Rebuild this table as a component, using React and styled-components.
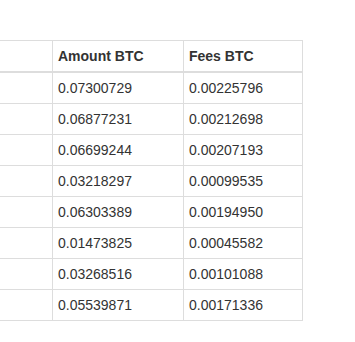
import React from "react";
import styled, { createGlobalStyle } from "styled-components";

const Global = createGlobalStyle`
  html, body { margin: 0; padding: 0; background: #fff; }
  body { font-family: "Liberation Sans", Arial, sans-serif; font-size: 14px; line-height: 20px; color: #333; }
`;

const Page = styled.div`
  width: 355px;
  height: 342px;
  overflow: hidden;
  padding-top: 40px;
  box-sizing: border-box;
`;

const Table = styled.table`
  border-collapse: collapse;
  border-spacing: 0;
  margin-left: -60px;
  border: 1px solid #ddd;
`;

const Th = styled.th`
  text-align: left;
  font-weight: bold;
  padding: 5px;
  border: 1px solid #ddd;
  border-bottom-width: 2px;
  vertical-align: bottom;
  width: ${(p) => p.$w}px;
  min-width: ${(p) => p.$w}px;
  max-width: ${(p) => p.$w}px;
`;

const Td = styled.td`
  padding: 5px;
  border: 1px solid #ddd;
  vertical-align: top;
  white-space: nowrap;
`;

const rows = [
  ["0.07300729", "0.00225796"],
  ["0.06877231", "0.00212698"],
  ["0.06699244", "0.00207193"],
  ["0.03218297", "0.00099535"],
  ["0.06303389", "0.00194950"],
  ["0.01473825", "0.00045582"],
  ["0.03268516", "0.00101088"],
  ["0.05539871", "0.00171336"],
];

export default function App() {
  return (
    <>
      <Global />
      <Page>
        <Table>
          <thead>
            <tr>
              <Th $w={101}></Th>
              <Th $w={120}>Amount BTC</Th>
              <Th $w={108}>Fees BTC</Th>
            </tr>
          </thead>
          <tbody>
            {rows.map((r, i) => (
              <tr key={i}>
                <Td></Td>
                <Td>{r[0]}</Td>
                <Td>{r[1]}</Td>
              </tr>
            ))}
          </tbody>
        </Table>
      </Page>
    </>
  );
}
